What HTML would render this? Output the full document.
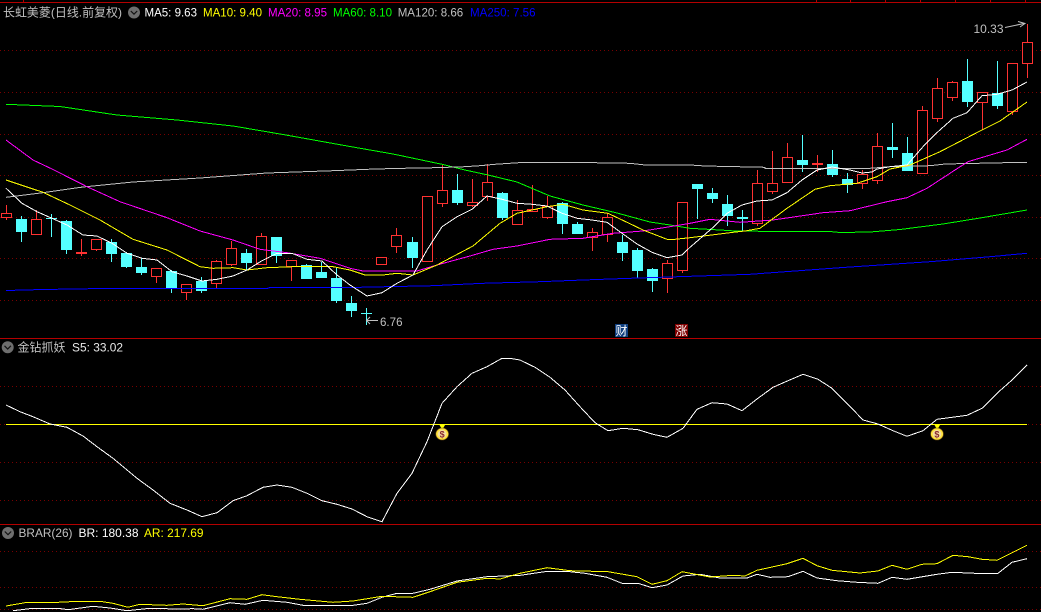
<!DOCTYPE html>
<html><head><meta charset="utf-8"><title>K</title>
<style>
html,body{margin:0;padding:0;background:#000;width:1041px;height:612px;overflow:hidden}
svg{display:block}
text{font-family:"Liberation Sans","WenQuanYi Zen Hei","Noto Sans CJK SC",sans-serif;font-size:12px}
</style></head><body>
<svg width="1041" height="612" viewBox="0 0 1041 612" xmlns="http://www.w3.org/2000/svg">
<rect width="1041" height="612" fill="#000"/>
<g shape-rendering="crispEdges">
<!-- dotted grid -->
<path d="M0 50.5H1041M0 92.5H1041M0 134.5H1041M0 175.5H1041M0 217.5H1041M0 258.5H1041M0 300.5H1041M0 386.5H1041M0 424.5H1041M0 462.5H1041M0 500.5H1041M0 551.5H1041M0 587.5H1041M0 609.5H1041" stroke="#780000" stroke-width="1" stroke-dasharray="1 3" fill="none"/>
<!-- frame -->
<path d="M0 2.5H1041M0 338.5H1041M0 524.5H1041" stroke="#b40000" stroke-width="1" fill="none"/>
<path d="M23.5 0V2M816.5 0V2M850.5 0V2M885.5 0V2M920.5 0V2M955.5 0V2M990.5 0V2M1025.5 0V2" stroke="#b40000" stroke-width="1" fill="none"/>
<!-- red wicks -->
<path fill="none" stroke="#ff3232" stroke-width="1" d="M6.5 205V220M36.5 210V235M81.5 239V256M96.5 239V251M156.5 268V283M186.5 284V300M216.5 260V288M231.5 241V266M261.5 233V265M291.5 260V281M381.5 257V265M396.5 228V253M427.5 196V262M442.5 165V207M472.5 179V207M487.5 164V201M517.5 200V225M532.5 185V212M547.5 196V219M592.5 228V251M607.5 213V242M667.5 260V293M682.5 202V273M757.5 170V226M772.5 151V194M787.5 143V183M817.5 155V172M862.5 170V189M877.5 133V184M922.5 106V174M937.5 78V122M952.5 81V101M982.5 92V130M1012.5 63V115M1027.5 24V78"/>
<!-- red hollow bodies -->
<path fill="#000" stroke="#ff3232" stroke-width="1" d="M1.5 213.5h10v4h-10zM31.5 219.5h10v15h-10zM91.5 239.5h10v10h-10zM151.5 268.5h10v8h-10zM181.5 284.5h10v8h-10zM211.5 261.5h10v22h-10zM226.5 248.5h10v16h-10zM256.5 236.5h10v28h-10zM286.5 260.5h10v6h-10zM376.5 257.5h10v7h-10zM391.5 235.5h10v11h-10zM422.5 196.5h10v65h-10zM437.5 190.5h10v13h-10zM467.5 202.5h10v3h-10zM482.5 182.5h10v14h-10zM512.5 210.5h10v14h-10zM527.5 209.5h10v2h-10zM542.5 206.5h10v11h-10zM587.5 232.5h10v5h-10zM602.5 217.5h10v17h-10zM662.5 263.5h10v15h-10zM677.5 202.5h10v68h-10zM752.5 183.5h10v40h-10zM767.5 183.5h10v8h-10zM782.5 157.5h10v25h-10zM857.5 174.5h10v9h-10zM872.5 146.5h10v34h-10zM917.5 110.5h10v63h-10zM932.5 88.5h10v30h-10zM947.5 82.5h10v15h-10zM977.5 92.5h10v10h-10zM1007.5 63.5h10v48h-10zM1022.5 42.5h10v21h-10z"/>
<!-- red filled bodies -->
<path fill="#ff3232" d="M76 252h11v2h-11zM812 163h11v2h-11z"/>
<!-- cyan wicks -->
<path fill="none" stroke="#54ffff" stroke-width="1" d="M21.5 216V242M51.5 214V237M66.5 220V254M111.5 239V262M126.5 252V268M141.5 258V275M171.5 270V293M201.5 277V293M246.5 249V270M276.5 237V263M306.5 264V279M321.5 262V278M336.5 267V303M351.5 296V317M366.5 308V325M412.5 237V268M457.5 174V205M502.5 192V220M562.5 202V234M577.5 222V234M622.5 235V261M637.5 248V278M652.5 268V292M697.5 184V219M712.5 188V203M727.5 195V226M742.5 210V231M802.5 135V172M832.5 150V177M847.5 173V193M892.5 123V158M907.5 137V171M967.5 59V107M997.5 61V109"/>
<!-- cyan bodies -->
<path fill="#54ffff" d="M16 219h11v13h-11zM46 218h11v1h-11zM61 221h11v29h-11zM106 242h11v12h-11zM121 253h11v14h-11zM136 267h11v6h-11zM166 271h11v17h-11zM196 281h11v10h-11zM241 253h11v10h-11zM271 237h11v19h-11zM301 265h11v14h-11zM316 272h11v6h-11zM331 278h11v23h-11zM346 303h11v8h-11zM361 313h11v1h-11zM407 242h11v16h-11zM452 190h11v13h-11zM497 193h11v25h-11zM557 203h11v21h-11zM572 224h11v10h-11zM617 242h11v11h-11zM632 250h11v21h-11zM647 269h11v12h-11zM692 184h11v5h-11zM707 193h11v6h-11zM722 204h11v12h-11zM737 217h11v2h-11zM797 160h11v5h-11zM827 164h11v11h-11zM842 179h11v6h-11zM887 147h11v3h-11zM902 153h11v18h-11zM962 81h11v21h-11zM992 93h11v13h-11z"/>
<!-- MA lines -->
<g fill="none" stroke-width="1">
<polyline stroke="#0000ff" points="6,290.5 43,289.5 103,288.5 267,288.5 270,287.5 350,287.5 433,285.7 483,283.3 540,281.7 583,280 630,278.3 690,276.3 750,274.3 840,267.7 930,261.7 990,256.7 1027,253.3"/>
<polyline stroke="#00ff00" points="6,104.3 60,106.5 117,115 177,120 233,126 283,134.5 350,146.5 393,154 443,164.5 465,170 488,175 517,182 550,196 583,205 617,213 650,222 670,225 690,228.3 720,230 735,231 780,231.5 830,231.5 840,232.5 870,232 900,229.5 943,224 980,218 1027,210"/>
<polyline stroke="#c0c0c0" points="6,197.3 43,192.7 83,187 133,182 200,178 267,173 333,170.7 375,169 403,168.3 435,167.7 465,166.7 480,165.7 495,164.3 525,162.3 570,162.3 630,163.3 645,165 690,165 705,166 765,167.3 765,168.3 870,168.3 890,166.7 930,165.7 945,164 1005,162.7 1027,162.3"/>
<polyline stroke="#ff00ff" points="6,140 33,160 53,169.5 87,186.7 120,201.7 167,217.7 200,231 233,240 260,249.3 287,252.7 320,258.3 350,268.3 363,271 417,271 437,265 470,256 493,249.3 517,246 550,239.3 583,238.3 613,233.3 643,231 670,226.7 690,223.3 710,219.3 740,222.3 773,220 823,212.7 850,210.7 887,201.7 907,197.7 927,188.3 955,170 968,161.7 1007,150 1027,139.3"/>
<polyline stroke="#ffff00" points="6,180 43,192.3 70,205 100,220 133,239.3 167,250 200,266.7 213,268.3 233,267.7 247,270 267,267.7 293,266.7 333,266.7 350,270 365,275 383,275 397,273.3 413,275 437,265 473,246 500,223.3 517,213.3 547,206.7 563,204.3 583,210 608,213.3 627,222.3 643,230 667,239.3 675,239.3 690,237.7 733,232.3 745,231 760,228.3 787,208.3 815,189.3 830,185.7 857,183.3 877,176.7 890,169 910,165 940,151.7 980,131 1000,121 1027,102"/>
<polyline stroke="#ffffff" points="6,188.3 22,203.3 37,211.7 52,218.3 67,225 83,235 97,236 112,243.3 127,253.3 142,258.3 157,260 172,271.7 187,276 202,281 217,279.3 233,276 247,270 262,260.7 277,253.3 292,253.3 307,259.3 322,261 337,275 350,285 367,296 382,292.7 397,283.3 413,275 427,250 442,226.7 457,216.7 472,209.3 487,196 502,199.3 517,203.3 532,204.3 547,206 562,213.3 577,218.3 592,220 607,222.3 622,233.3 637,244 652,252.3 667,257.7 682,255 690,247.3 712,228.3 727,213.3 742,205 757,201 772,200 787,192.7 802,180 817,170 832,167 850,170 862,173 872,172 877,169 890,166.7 907,165 923,146.7 938,131.7 953,118.3 967,112.7 982,95.7 997,94.3 1012,90 1027,82"/>
<!-- S5 panel -->
<path stroke="#ffff00" d="M6 424.5H1027"/>
<polyline stroke="#ffffff" points="6,405 20,411.7 33,416.7 50,424 67,427.3 83,436 97,446.7 113,458.3 137,478.3 153,490 170,503.3 187,510 202,516.7 217,512.7 233,500.7 247,495.7 263,487.3 277,485 292,487.3 307,493.3 322,500.7 337,504.3 352,509 367,516.7 382,521.7 397,493.3 412,473.3 427,441.7 442,403.3 457,386.7 472,373.3 487,366.7 502,358.3 510,358.3 520,360 535,367.3 550,377.3 565,390 580,406.7 595,422.7 608,430.7 623,428.3 638,429.7 653,434.3 667,437.3 683,428.3 697,409.3 712,402.7 727,404 742,410.7 757,399 773,387.3 788,380.7 803,374.3 818,379.3 832,388.3 847,403.3 863,420 878,424 893,430.7 907,436.3 923,430.7 937,419.3 952,417.3 967,415.3 982,408.3 997,393.3 1012,380 1027,365"/>
<!-- BRAR panel -->
<polyline stroke="#ffffff" points="13,610.7 33,608.3 58,608.3 68,609.7 93,606.3 110,608 127,610.7 150,608.3 177,609 193,608.7 203,609.3 230,602.7 245,604.3 263,600.3 287,602.3 303,605.3 353,605.3 367,603.3 382,597.3 397,593.3 413,593.3 430,589.3 457,581 487,576.7 520,575.3 545,571.7 570,571.7 585,573.3 607,577.3 622,583.3 638,583.3 652,587.7 667,585 683,576 700,574.3 720,578 747,578 757,574.3 770,577.3 788,576.7 803,571.3 817,578 837,580.7 857,582.3 878,583.3 892,577.3 907,579.3 937,574.3 952,572.3 975,573.3 998,573.3 1012,562.3 1027,558.7"/>
<polyline stroke="#ffff00" points="6,606 25,602.7 58,602.3 78,601.3 100,601.3 113,603.3 128,607.3 140,604.3 167,605.3 183,604 203,605.7 230,598.7 247,599.3 262,594.7 277,596.7 300,599.3 333,602.3 353,601 382,596.3 413,597.3 430,591.7 457,582.3 487,578.3 500,579 520,573.3 547,567.7 570,570.7 608,571.7 637,576.7 652,584.3 667,580.7 682,571.7 710,577 733,575.3 745,576 757,570.3 787,563.7 803,558.3 817,565.7 832,570.3 860,573 878,571 892,565.3 907,569.3 922,564.3 937,563.7 953,555.3 968,556.7 982,559.3 997,560.3 1027,545.3"/>
</g>
<!-- markers -->
<rect x="615" y="324" width="13" height="13" fill="#0f3f7f"/>
<rect x="675" y="324" width="13" height="13" fill="#800000"/>
</g>
<!-- price arrows -->
<path d="M1005 27.5L1024 23.5M1018 21.5L1025 23.5L1020 27" fill="none" stroke="#c0c0c0" stroke-width="1"/>
<path d="M378 320.5H367M370 317L366.5 320.5L370 324" fill="none" stroke="#c0c0c0" stroke-width="1"/>
<!-- badge text -->
<text x="615.5" y="335" fill="#fff" textLength="12" lengthAdjust="spacingAndGlyphs">财</text>
<text x="675.5" y="335" fill="#fff" textLength="12" lengthAdjust="spacingAndGlyphs">涨</text>
<!-- money bags -->
<g>
<path d="M439.5 425h5.5l-2 3.5h-1.5z" fill="#ffff00"/>
<ellipse cx="442.2" cy="434" rx="6.4" ry="6" fill="#ffe23c" stroke="#6a4a10" stroke-width=".6"/>
<ellipse cx="442.2" cy="434" rx="4.4" ry="4" fill="#f5dfa0"/>
<text x="439.6" y="437.3" fill="#8a2a30" style="font-size:9px;font-weight:bold">$</text>
<path d="M934.5 425h5.5l-2 3.5h-1.5z" fill="#ffff00"/>
<ellipse cx="937" cy="434" rx="6.4" ry="6" fill="#ffe23c" stroke="#6a4a10" stroke-width=".6"/>
<ellipse cx="937" cy="434" rx="4.4" ry="4" fill="#f5dfa0"/>
<text x="934.4" y="437.3" fill="#8a2a30" style="font-size:9px;font-weight:bold">$</text>
</g>
<!-- price labels -->
<text x="973.5" y="33" fill="#c0c0c0" textLength="30" lengthAdjust="spacingAndGlyphs">10.33</text>
<text x="380" y="326" fill="#c0c0c0" textLength="22.5" lengthAdjust="spacingAndGlyphs">6.76</text>
<!-- main header -->
<text x="3" y="16.5" fill="#c0c0c0" textLength="119" lengthAdjust="spacingAndGlyphs">长虹美菱(日线.前复权)</text>
<circle cx="134" cy="12.5" r="6" fill="#6e6e6e"/>
<path d="M130.8 11L134 14.2L137.2 11" fill="none" stroke="#111" stroke-width="1.2"/>
<text x="144.5" y="16.5" fill="#fff" textLength="52.5" lengthAdjust="spacingAndGlyphs">MA5: 9.63</text>
<text x="203" y="16.5" fill="#ffff00" textLength="59" lengthAdjust="spacingAndGlyphs">MA10: 9.40</text>
<text x="268" y="16.5" fill="#ff00ff" textLength="59" lengthAdjust="spacingAndGlyphs">MA20: 8.95</text>
<text x="333" y="16.5" fill="#00ff00" textLength="59" lengthAdjust="spacingAndGlyphs">MA60: 8.10</text>
<text x="397.7" y="16.5" fill="#c0c0c0" textLength="65.5" lengthAdjust="spacingAndGlyphs">MA120: 8.66</text>
<text x="470" y="16.5" fill="#0000ff" textLength="65.5" lengthAdjust="spacingAndGlyphs">MA250: 7.56</text>
<!-- S5 header -->
<circle cx="7.7" cy="347.3" r="6" fill="#6e6e6e"/>
<path d="M4.5 345.8L7.7 349L10.9 345.8" fill="none" stroke="#111" stroke-width="1.2"/>
<text x="17.5" y="351.5" fill="#c0c0c0" textLength="48" lengthAdjust="spacingAndGlyphs">金钻抓妖</text>
<text x="72" y="351.5" fill="#e8e8e8" textLength="51" lengthAdjust="spacingAndGlyphs">S5: 33.02</text>
<!-- BRAR header -->
<circle cx="8" cy="533" r="6" fill="#6e6e6e"/>
<path d="M4.8 531.5L8 534.7L11.2 531.5" fill="none" stroke="#111" stroke-width="1.2"/>
<text x="18.5" y="537" fill="#c0c0c0" textLength="54" lengthAdjust="spacingAndGlyphs">BRAR(26)</text>
<text x="78.5" y="537" fill="#fff" textLength="60" lengthAdjust="spacingAndGlyphs">BR: 180.38</text>
<text x="144" y="537" fill="#ffff00" textLength="59.5" lengthAdjust="spacingAndGlyphs">AR: 217.69</text>
</svg>
</body></html>
